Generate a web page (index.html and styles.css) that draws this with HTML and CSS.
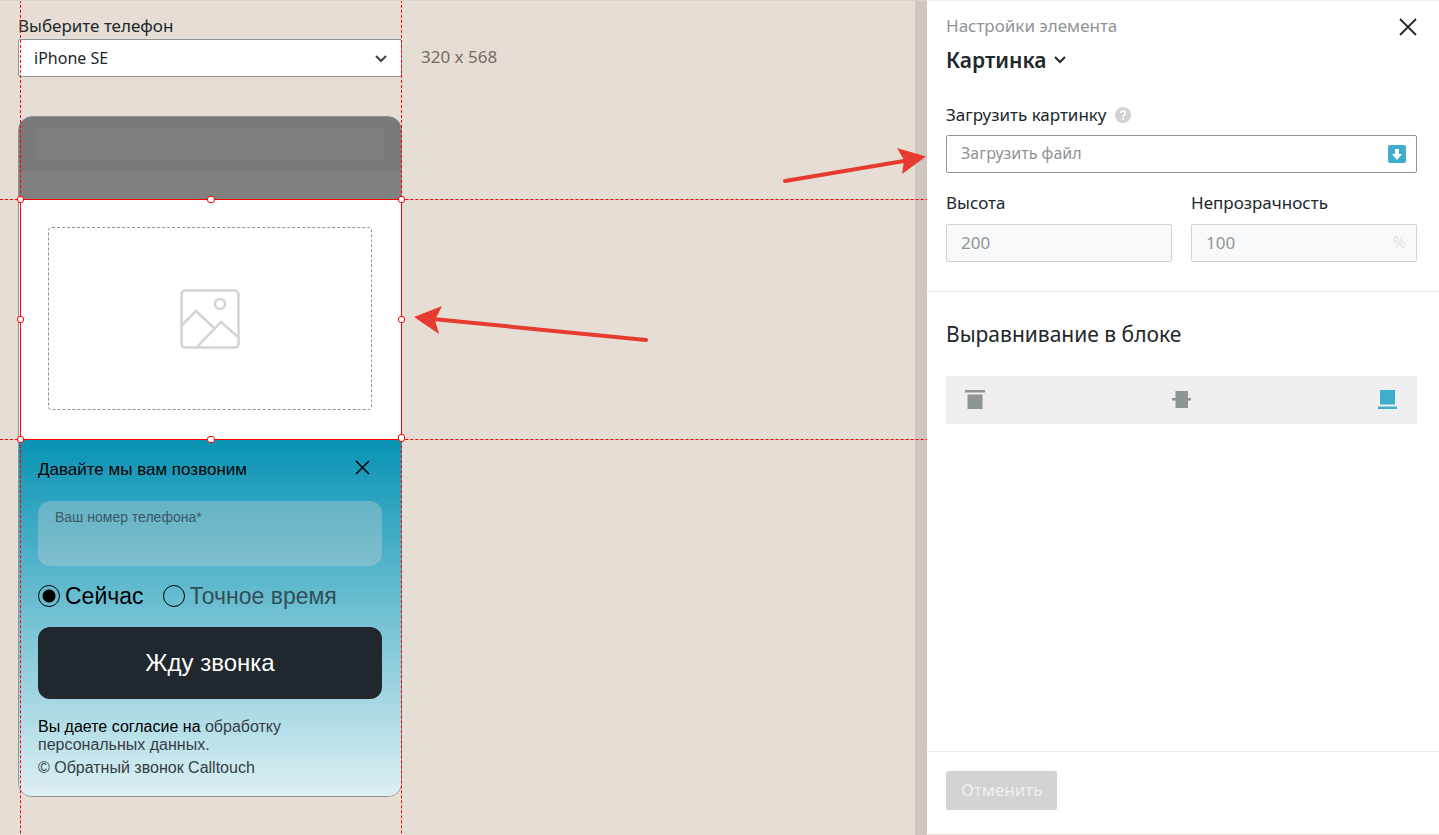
FILE: index.html
```html
<!DOCTYPE html>
<html lang="ru">
<head>
<meta charset="utf-8">
<title>Настройки элемента</title>
<link rel="stylesheet" href="styles.css">
</head>
<body>
<div class="app">
  <main class="stage">
    <label class="label" for="phone">Выберите телефон</label>
    <div class="device-row">
      <div class="select-wrap">
        <select id="phone" class="select"><option>iPhone SE</option></select>
        <svg class="select-arrow" width="14" height="8" viewBox="0 0 14 8"><path d="M2 1l5 5 5-5" fill="none" stroke="#3c4448" stroke-width="2"/></svg>
      </div>
      <span class="device-size">320 x 568</span>
    </div>

    <div class="phone">
      <div class="browser"><div class="browser-head"><div class="address"></div></div></div>
      <div class="picture">
        <div class="dropzone">
          <svg width="60" height="60" viewBox="0 0 60 60" fill="none" stroke="#d3d3d3" stroke-width="2.5"><rect x="1.5" y="1.5" width="57" height="57" rx="4"/><circle cx="40" cy="15" r="5"/><path d="M2 36l14-14 18 17M17 58l24-25 17 15" stroke-linejoin="miter"/></svg>
        </div>
        <i class="guide guide-top"></i><i class="guide guide-bottom"></i><i class="guide guide-left"></i><i class="guide guide-right"></i>
        <i class="frame"></i>
        <i class="handle n w"></i><i class="handle n c"></i><i class="handle n e"></i>
        <i class="handle m w"></i><i class="handle m e"></i>
        <i class="handle s w"></i><i class="handle s c"></i><i class="handle s e"></i>
      </div>
      <form class="callback">
        <div class="callback-head">
          <span>Давайте мы вам позвоним</span>
          <button class="icon-button callback-close" type="button" aria-label="Закрыть"><svg width="15" height="15" viewBox="0 0 15 15"><path d="M1 1l13 13M14 1L1 14" stroke="#000" stroke-width="1.5"/></svg></button>
        </div>
        <input class="tel" type="tel" placeholder="Ваш номер телефона*" aria-label="Ваш номер телефона">
        <div class="times">
          <label class="time"><input type="radio" name="time" checked><span>Сейчас</span></label>
          <label class="time muted"><input type="radio" name="time"><span>Точное время</span></label>
        </div>
        <button class="call-button" type="button">Жду звонка</button>
        <p class="consent">Вы даете согласие на <a href="#">обработку<br>персональных данных.</a></p>
        <p class="copyright"><a href="#">© Обратный звонок Calltouch</a></p>
      </form>
      <svg class="pointer" width="240" height="40" viewBox="0 0 240 40"><path d="M20 12l213 21" stroke="#e63c30" stroke-width="4" stroke-linecap="round"/><path d="M1 10L29-1l-7 14 4 14z" fill="#e63c30"/></svg>
    </div>
    <svg class="pointer-upload" width="148" height="48" viewBox="0 0 148 48"><path d="M6 36L125 16" stroke="#e63c30" stroke-width="4" stroke-linecap="round"/><path d="M147 11.500L118 3l7 12-2 14z" fill="#e63c30"/></svg>
  </main>

  <aside class="panel">
    <section class="section">
      <div class="panel-head">
        <div>
          <div class="caption">Настройки элемента</div>
          <h1><button class="title-button" type="button">Картинка <svg width="12" height="8" viewBox="0 0 12 8"><path d="M1 1l5 5 5-5" fill="none" stroke="#20282c" stroke-width="2"/></svg></button></h1>
        </div>
        <button class="icon-button" type="button" aria-label="Закрыть"><svg width="18" height="18" viewBox="0 0 18 18"><path d="M1 1l16 16M17 1L1 17" stroke="#20282c" stroke-width="1.800"/></svg></button>
      </div>
      <div class="label-row">
        <label class="label" for="upload">Загрузить картинку</label>
        <svg width="16" height="16" viewBox="0 0 16 16"><circle cx="8" cy="8" r="8" fill="#d3d3d3"/><path d="M5.700 6.200C5.700 3.200 10.300 3.200 10.300 6.100 10.300 7.700 8 7.900 8 9.700M8 11v1.800" fill="none" stroke="#fff" stroke-width="1.600"/></svg>
      </div>
      <div class="field">
        <input id="upload" class="input" type="text" placeholder="Загрузить файл">
        <svg class="suffix" width="18" height="18" viewBox="0 0 18 18"><rect width="18" height="18" rx="2" fill="#3faecd"/><path d="M7 4h4v5h3l-5 6-5-6h3z" fill="#fff"/></svg>
      </div>
      <div class="pair">
        <div>
          <label class="label" for="height">Высота</label>
          <div class="field"><input id="height" class="input" type="text" value="200" disabled></div>
        </div>
        <div>
          <label class="label" for="opacity">Непрозрачность</label>
          <div class="field"><input id="opacity" class="input" type="text" value="100" disabled><span class="suffix percent">%</span></div>
        </div>
      </div>
    </section>
    <section class="section align-section">
      <h2>Выравнивание в блоке</h2>
      <div class="align">
        <button class="icon-button" type="button" aria-label="Сверху"><svg width="20" height="20" viewBox="0 0 20 20" fill="#8f9496"><path d="M0 0h20v2.500H0zM2.500 4.500h15V19h-15z"/></svg></button>
        <button class="icon-button" type="button" aria-label="По центру"><svg width="20" height="20" viewBox="0 0 20 20" fill="#8f9496"><path d="M3.500 1H16v17H3.500zM0 8h19v2.500H0z"/></svg></button>
        <button class="icon-button" type="button" aria-label="Снизу"><svg width="20" height="20" viewBox="0 0 20 20" fill="#3faecd"><path d="M2 0h15v14.500H2zM0 16.500h19V19H0z"/></svg></button>
      </div>
    </section>
    <footer class="footer"><button class="cancel" type="button" disabled>Отменить</button></footer>
  </aside>
</div>
</body>
</html>
```
FILE: styles.css
```css
* { box-sizing: border-box; }
body { margin: 0; background: #e6ded5; color: #20282c; font: 17px/24px "Noto Sans", sans-serif; }
button, input, select { font: inherit; color: inherit; }
h1, h2, p { margin: 0; }
.app { display: flex; min-height: 100vh; }
.stage { position: relative; flex: 1; overflow: hidden; padding: 13px 18px 38px; background: #e6ded5; box-shadow: inset -12px 0 #cfc6bd; border-top: 1px solid #dcd4cb; }
.label { display: block; }
.device-row { display: flex; align-items: center; gap: 19px; margin: 1px 0 39px; }
.select-wrap { position: relative; width: 384px; }
.select { display: block; width: 100%; height: 38px; padding: 0 15px; appearance: none; border: 1px solid #8f9496; border-radius: 2px; background: #fff; font-size: 16px; }
.select-arrow { position: absolute; right: 14px; top: 16px; }
.device-size { padding-bottom: 2px; color: #756c64; }

.phone { position: relative; width: 384px; border: 1px solid #8f9496; border-radius: 14px; }
.browser { height: 82px; background: #808080; border-radius: 13px 13px 0 0; overflow: hidden; }
.browser-head { padding: 10px 16px 11px; background: #797979; }
.address { height: 33px; border-radius: 4px; background: #7d7d7d; }
.picture { position: relative; height: 241px; padding: 28px 29px 30px; background: #fff; }
.dropzone { display: flex; align-items: center; justify-content: center; height: 100%; border: 1px dashed #8f9496; border-radius: 4px; }
.frame { position: absolute; top: 0; bottom: 0; left: 1px; right: -1px; border: 1px solid #f00; }
.guide { position: absolute; border: 0 dashed #f00; }
.guide-top, .guide-bottom { left: -19px; width: 100vw; border-top-width: 1px; }
.guide-top { top: 0; }
.guide-bottom { bottom: 0; }
.guide-left, .guide-right { top: -200vh; height: 400vh; border-left-width: 1px; }
.guide-left { left: 1px; }
.guide-right { right: -1px; }
.handle { position: absolute; width: 7px; height: 7px; border: 1px solid #f00; border-radius: 3px; background: #fff; }
.handle.c { width: 8px; left: 188px; }
.handle.w { left: -2px; }
.handle.e { right: -4px; }
.handle.n { top: -3px; }
.handle.m { top: 117px; }
.handle.s { bottom: -3px; }
.handle.s.e { height: 8px; bottom: -2px; }

.callback { padding: 18px 19px 19px; border-radius: 0 0 13px 13px; background: linear-gradient(#0893b4, #def0f4); color: #000; font-family: "Liberation Sans", Arial, sans-serif; }
.callback-head { display: flex; justify-content: space-between; height: 24px; margin-bottom: 19px; font-size: 17px; line-height: 24px; }
.icon-button { display: flex; align-items: flex-start; padding: 0; border: 0; background: none; }
.callback-close { padding: 2px 12px 0 0; }
.tel { display: block; width: 100%; height: 65px; padding: 0 17px 34px; border: 0; border-radius: 12px; background: rgba(211, 211, 211, .34); font-size: 14px; }
.tel::placeholder { color: #20282c; opacity: .65; }
.times { display: flex; gap: 19px; margin: 16px 0 17px; font-size: 23px; line-height: 28px; }
.time { display: flex; align-items: center; gap: 5px; }
.time input { width: 22px; height: 22px; margin: 0; appearance: none; border: 1px solid #000; border-radius: 50%; }
.time input:checked { background: radial-gradient(circle, #000 6px, transparent 7px); }
.muted span { color: #20282c; opacity: .75; }
.call-button { display: block; width: 100%; height: 72px; border: 0; border-radius: 12px; background: #20282e; color: #fff; font-size: 24px; }
.consent { margin-top: 19px; font-size: 16px; line-height: 18px; }
.copyright { margin-top: 5px; font-size: 16px; line-height: 18px; }
.consent a, .copyright a { color: #333e43; text-decoration: none; }
.pointer { position: absolute; left: 394px; top: 190px; overflow: visible; }
.pointer-upload { position: absolute; right: 0; top: 144px; }

.panel { display: flex; flex-direction: column; width: 512px; margin-bottom: 1px; background: #fff; border-top: 1px solid #f0f0f0; }
.section { padding: 13px 22px 29px 19px; border-bottom: 1px solid #ebebeb; }
.panel-head { display: flex; justify-content: space-between; margin-bottom: 29px; }
.panel-head > .icon-button { padding-top: 4px; }
.caption { color: #8f9496; }
.title-button { display: flex; align-items: center; gap: 8px; margin-top: 8px; padding: 0; border: 0; background: none; font-size: 21px; font-weight: 600; line-height: 28px; }
.label-row { display: flex; align-items: center; gap: 8px; margin-bottom: 8px; }
.field { position: relative; }
.input { display: block; width: 100%; height: 38px; padding: 0 14px 2px; border: 1px solid #8f9496; border-radius: 2px; background: #fff; font-size: 16px; }
.input::placeholder { color: #8f9496; opacity: 1; }
.input:disabled { border-color: #d3d3d3; background: #f8f9fb; color: #8f9496; font-size: 17px; }
.suffix { position: absolute; right: 11px; top: 10px; }
.percent { top: 6px; color: #e2e4e5; font-size: 16px; }
.pair { display: grid; grid-template-columns: 1fr 1fr; gap: 19px; margin-top: 18px; }
.pair .label { margin-bottom: 9px; }
.align-section { flex: 1; padding-top: 28px; }
h2 { margin-bottom: 27px; font-size: 21px; font-weight: 400; line-height: 29px; }
.align { display: flex; justify-content: space-between; padding: 14px 19px; background: #efefef; }
.footer { padding: 19px; padding-bottom: 24px; }
.cancel { display: block; height: 39px; padding: 0 15px 2px; border: 0; border-radius: 2px; background: #d3d3d3; color: #f0f0f0; }
```
